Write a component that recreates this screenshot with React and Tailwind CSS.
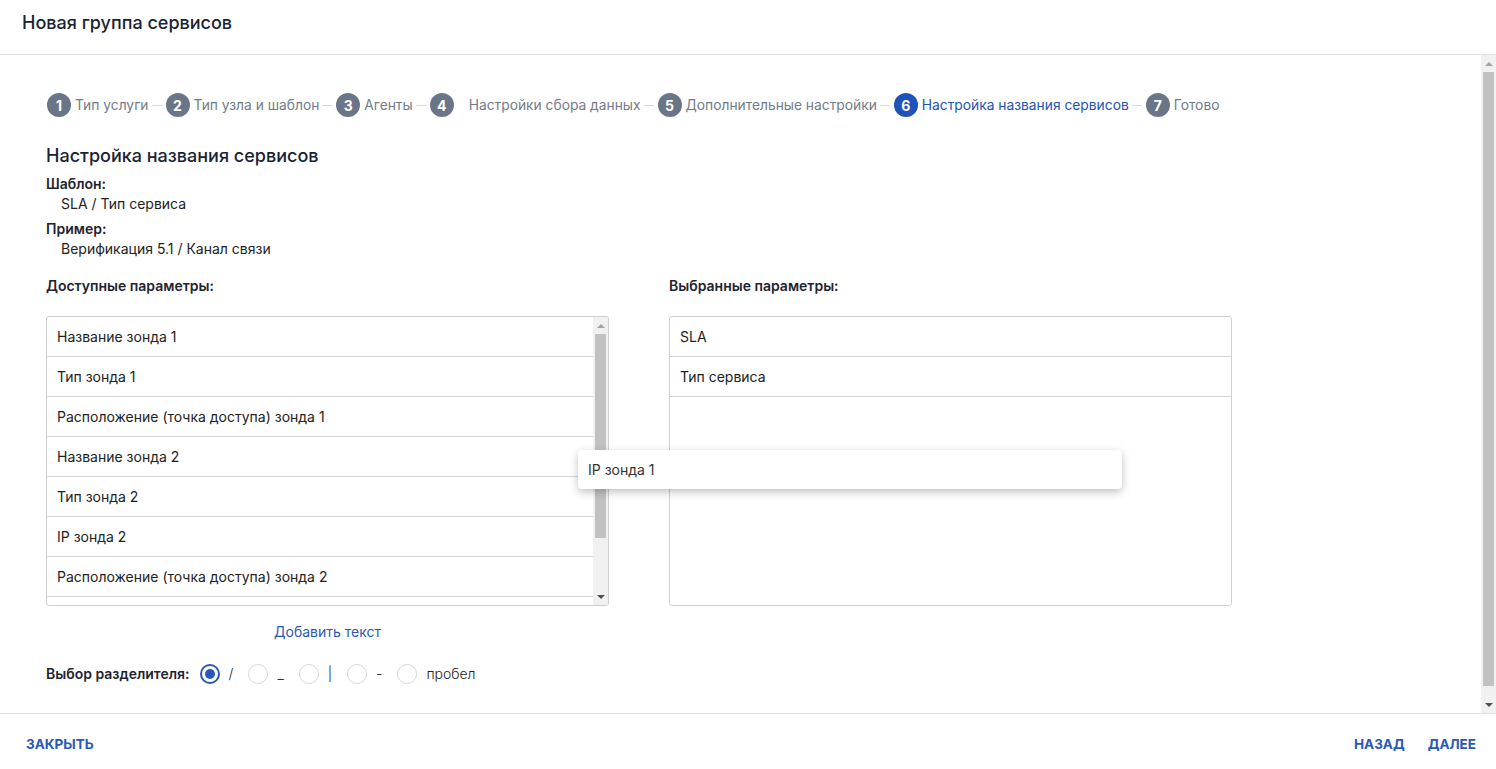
import React from "react";

const steps = [
  { n: 1, label: "Тип услуги" },
  { n: 2, label: "Тип узла и шаблон" },
  { n: 3, label: "Агенты" },
  { n: 4, label: "Настройки сбора данных", wide: true },
  { n: 5, label: "Дополнительные настройки" },
  { n: 6, label: "Настройка названия сервисов", active: true },
  { n: 7, label: "Готово" },
];

const available = [
  "Название зонда 1",
  "Тип зонда 1",
  "Расположение (точка доступа) зонда 1",
  "Название зонда 2",
  "Тип зонда 2",
  "IP зонда 2",
  "Расположение (точка доступа) зонда 2",
  "",
];

const selected = ["SLA", "Тип сервиса"];

const separators = [
  { label: "/", checked: true },
  { label: "_" },
  { label: "|" },
  { label: "-" },
  { label: "пробел" },
];

function Scrollbar({ thumb }) {
  // classic windows style scrollbar, just drawn
  return (
    <div className="w-[15px] shrink-0 bg-[#f1f1f1] flex flex-col items-center">
      <div className="h-[17px] flex items-center justify-center">
        <div className="w-0 h-0 border-x-[4px] border-x-transparent border-b-[4px] border-b-[#a3a3a3]" />
      </div>
      <div className={`w-[11px] bg-[#c1c1c1] ${thumb}`} />
      <div className="flex-1" />
      <div className="h-[17px] flex items-center justify-center">
        <div className="w-0 h-0 border-x-[4px] border-x-transparent border-t-[4px] border-t-[#505050]" />
      </div>
    </div>
  );
}

function Step({ n, label, active, wide, last }) {
  return (
    <div className="flex items-center">
      <span
        className={`w-6 h-6 rounded-full flex items-center justify-center text-white text-[14px] font-bold ${
          active ? "bg-[#1f53b8]" : "bg-[#6b7588]"
        }`}
      >
        {n}
      </span>
      <span
        className={`text-[13.8px] ${wide ? "ml-[15px]" : "ml-[4px]"} ${active ? "text-[#2452b5]" : "text-[#737b89]"}`}
      >
        {label}
      </span>
      {!last && <span className="mx-[3px] w-[10px] h-px bg-[#d6d9de]" />}
    </div>
  );
}

export default function App() {
  return (
    <div
      className="w-[1496px] h-[769px] flex flex-col bg-white text-[#1f2430] overflow-hidden"
      style={{ fontFamily: "Inter, 'Noto Sans', sans-serif" }}
    >
      {/* Header */}
      <div className="h-[55px] shrink-0 border-b border-[#e0e0e0] flex items-center px-[22px] pb-[10px]">
        <h1 className="text-[18px] font-medium text-[#1a2333]">Новая группа сервисов</h1>
      </div>

      {/* Body */}
      <div className="flex-1 flex min-h-0">
        <div className="flex-1 pl-[46px] pt-[38px] relative">
          {/* Stepper */}
          <div className="flex items-center gap-[1px] pl-[1px]">
            {steps.map((s, i) => (
              <Step key={s.n} {...s} last={i === steps.length - 1} />
            ))}
          </div>

          <h2 className="mt-[26px] text-[18px] font-medium text-[#1a2333] leading-[26px]">
            Настройка названия сервисов
          </h2>

          <div className="mt-[5px] text-[14px] leading-5">
            <p className="font-semibold">Шаблон:</p>
            <p className="pl-[15px] text-[#222]">SLA / Тип сервиса</p>
            <p className="font-semibold mt-[5px]">Пример:</p>
            <p className="pl-[15px] text-[#222]">Верификация 5.1 / Канал связи</p>
          </div>

          <div className="flex gap-[60px] mt-[17px]">
            <div className="w-[563px]">
              <p className="text-[14px] font-semibold leading-5">Доступные параметры:</p>
              <div className="mt-[20px] h-[290px] border border-[#cfcfcf] rounded-[3px] flex overflow-hidden">
                <div className="flex-1 overflow-hidden">
                  {available.map((a, i) => (
                    <div
                      key={i}
                      className="h-10 border-b border-[#d4d4d4] flex items-center px-[10px] text-[14px] text-[#222]"
                    >
                      {a}
                    </div>
                  ))}
                </div>
                <Scrollbar thumb="h-[204px]" />
              </div>
              <div className="mt-[13px] text-center">
                <button className="text-[14px] text-[#2a58b8]">Добавить текст</button>
              </div>
            </div>

            <div className="w-[563px]">
              <p className="text-[14px] font-semibold leading-5">Выбранные параметры:</p>
              <div className="mt-[20px] h-[290px] border border-[#cfcfcf] rounded-[3px] overflow-hidden">
                {selected.map((a) => (
                  <div
                    key={a}
                    className="h-10 border-b border-[#d4d4d4] flex items-center px-[10px] text-[14px] text-[#222]"
                  >
                    {a}
                  </div>
                ))}
              </div>
            </div>
          </div>

          {/* Separator choice */}
          <div className="mt-[20px] flex items-center text-[14px]">
            <span className="font-semibold mr-[10px]">Выбор разделителя:</span>
            {separators.map((s) => (
              <label key={s.label} className="flex items-center mr-[15px]">
                <span
                  className={`w-5 h-5 rounded-full flex items-center justify-center ${
                    s.checked ? "border-2 border-[#2a58b8]" : "border border-[#d6d8de]"
                  }`}
                >
                  {s.checked && <span className="w-[10px] h-[10px] rounded-full bg-[#2a58b8]" />}
                </span>
                <span className="ml-[9px] text-[#222] font-light">{s.label}</span>
              </label>
            ))}
          </div>

          {/* Dragged item */}
          <div className="absolute left-[578px] top-[395px] w-[544px] h-[39px] bg-white rounded-[4px] shadow-[0_3px_8px_rgba(0,0,0,0.25)] flex items-center px-[10px] text-[14px] text-[#333]">
            IP зонда 1
          </div>
        </div>
        <Scrollbar thumb="h-[614px]" />
      </div>

      {/* Footer */}
      <div className="h-[56px] shrink-0 border-t border-[#e0e0e0] flex items-center justify-between pl-[26px] pr-[20px] pt-[6px]">
        <button className="text-[13.5px] font-bold text-[#2a58b8]">ЗАКРЫТЬ</button>
        <div className="flex gap-[23px]">
          <button className="text-[13.5px] font-bold text-[#2a58b8]">НАЗАД</button>
          <button className="text-[13.5px] font-bold text-[#2a58b8]">ДАЛЕЕ</button>
        </div>
      </div>
    </div>
  );
}
